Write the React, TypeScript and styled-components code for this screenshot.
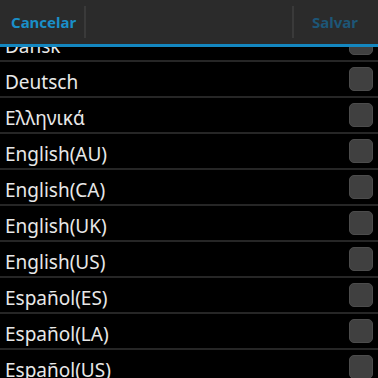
import React from "react";
import styled, { createGlobalStyle } from "styled-components";

const Global = createGlobalStyle`
  html, body { margin: 0; padding: 0; background: #000; }
  body { font-family: "Noto Sans", "Open Sans", sans-serif; }
`;

const Screen = styled.div`
  width: 378px;
  height: 378px;
  display: flex;
  flex-direction: column;
  overflow: hidden;
  background: #000;
`;

const Header = styled.div`
  position: relative;
  z-index: 2;
  height: 44px;
  flex: 0 0 auto;
  display: flex;
  align-items: center;
  background: #2b2b2b;
  border-bottom: 3px solid #1487c0;
`;

const HeaderButton = styled.div<{ $disabled?: boolean }>`
  height: 100%;
  display: flex;
  align-items: center;
  padding: ${(p) => (p.$disabled ? "0 20px 0 18px" : "0 8px 0 11px")};
  font-size: 15px;
  font-weight: 700;
  color: ${(p) => (p.$disabled ? "#1d5677" : "#1a8fc8")};
`;

const Divider = styled.div`
  width: 2px;
  height: 32px;
  background: #3a3a3a;
`;

const Spacer = styled.div`
  flex: 1;
`;

const ListViewport = styled.div`
  flex: 1;
  overflow: hidden;
`;

const List = styled.div`
  margin-top: -21px;
  display: flex;
  flex-direction: column;
`;

const Row = styled.div`
  height: 34px;
  flex: 0 0 auto;
  display: flex;
  align-items: center;
  justify-content: space-between;
  padding: 0 5px;
  border-bottom: 2px solid #262626;
  background: #000;
`;

const Label = styled.span`
  margin-top: 6px;
  font-size: 19px;
  line-height: 26px;
  color: #e8e8e8;
`;

const Box = styled.div`
  width: 22px;
  height: 22px;
  border-radius: 5px;
  background: #404040;
  border: 1px solid #4c4c4c;
`;

const langs = [
  "Dansk",
  "Deutsch",
  "Ελληνικά",
  "English(AU)",
  "English(CA)",
  "English(UK)",
  "English(US)",
  "Español(ES)",
  "Español(LA)",
  "Español(US)",
];

export default function App() {
  return (
    <Screen>
      <Global />
      <Header>
        <HeaderButton>Cancelar</HeaderButton>
        <Divider />
        <Spacer />
        <Divider />
        <HeaderButton $disabled>Salvar</HeaderButton>
      </Header>
      <ListViewport>
        <List>
          {langs.map((l) => (
            <Row key={l}>
              <Label>{l}</Label>
              <Box />
            </Row>
          ))}
        </List>
      </ListViewport>
    </Screen>
  );
}
